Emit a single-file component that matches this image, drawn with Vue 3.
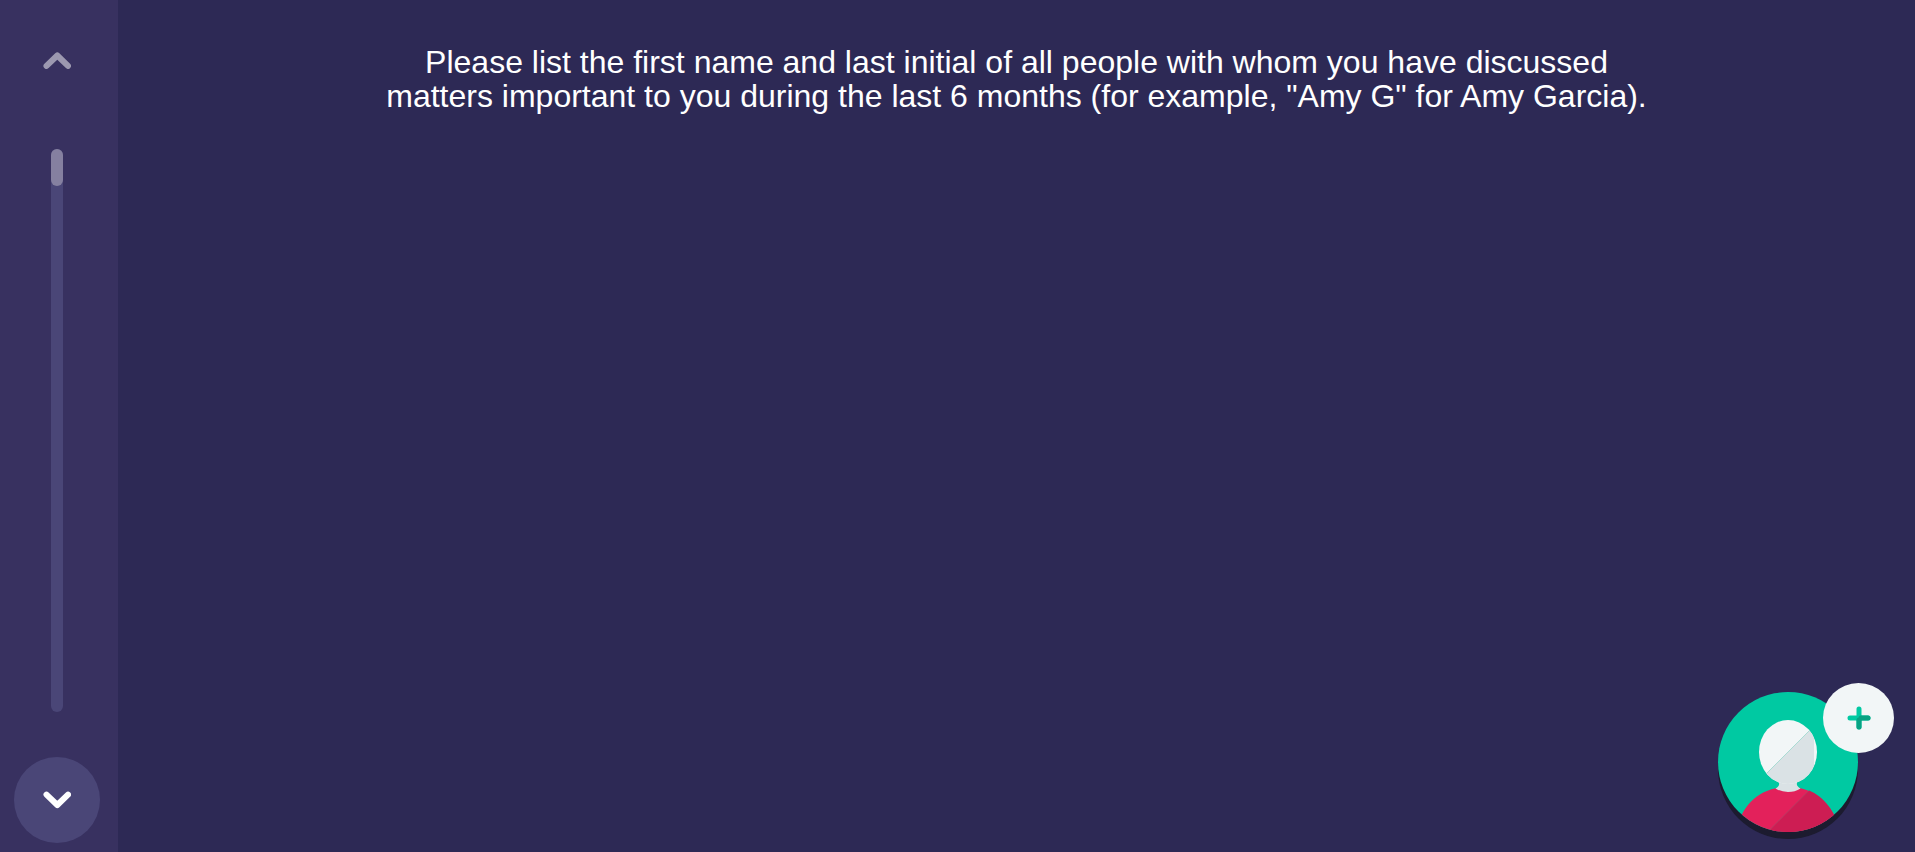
<script setup>
import { ref } from 'vue'

const prompt = 'Please list the first name and last initial of all people with whom you have discussed matters important to you during the last 6 months (for example, "Amy G" for Amy Garcia).'
const progress = ref(6.6)
</script>

<template>
  <div class="stage">
    <nav class="timeline" aria-label="Interview navigation">
      <button class="nav-button back" type="button" aria-label="Back">
        <svg viewBox="0 0 28 18" aria-hidden="true"><path d="M3.500 13.900 14.300 3.500 25 13.900" /></svg>
      </button>
      <div class="track" role="progressbar" aria-label="Progress" :aria-valuenow="progress">
        <div class="fill" :style="{ height: progress + '%' }"></div>
      </div>
      <button class="nav-button next" type="button" aria-label="Next">
        <svg viewBox="0 0 28 18" aria-hidden="true"><path d="M3.500 3.600 14.300 14 25 3.600" /></svg>
      </button>
    </nav>

    <main class="content">
      <h1 class="prompt">{{ prompt }}</h1>

      <button class="add-person" type="button" aria-label="Add a person">
        <svg class="avatar" viewBox="0 0 140 147" aria-hidden="true">
          <defs>
            <clipPath id="disc"><circle cx="70" cy="70" r="70" /></clipPath>
            <clipPath id="head"><ellipse cx="70" cy="60" rx="29" ry="32" /></clipPath>
          </defs>
          <circle cx="70" cy="77" r="70" fill="#1c1b2f" />
          <circle cx="70" cy="70" r="70" fill="#00c9a2" />
          <g clip-path="url(#disc)">
            <path d="M18 140C23 113 42 95 70 95S116 113 122 140Z" fill="#e3215b" />
            <path d="M91 98.500C105 104 118 120 122 140H50Z" fill="#cd1d53" />
            <path d="M91 98.500 50 139.500" stroke="#a34a69" stroke-width=".7" />
          </g>
          <path d="M58 84 61 91Q62 94 57.500 96.500Q63 100 70 100T82.500 96.500Q78 94 79 91L82 84Z" fill="#dae2e5" />
          <g clip-path="url(#head)">
            <path d="M38 26H104V92H38Z" fill="#f2f6f7" />
            <path d="M96 34V94H36Z" fill="#dae2e5" />
            <path d="M96 34 36 94" stroke="#8fd5c9" stroke-width=".7" />
          </g>
        </svg>
        <span class="badge">
          <svg viewBox="0 0 24 24" aria-hidden="true">
            <path d="M12 3V21M3 12H21" stroke="#00c9a2" />
            <path d="M12 14V21M14 12H21" stroke="#07a283" />
            <path d="M14.500 9.500V14.500H9.500Z" fill="#07a283" />
          </svg>
        </span>
      </button>
    </main>
  </div>
</template>

<style>
html,
body {
  margin: 0;
  background: #2d2955;
}
</style>

<style scoped>
.stage {
  display: flex;
  min-height: 100vh;
  background: #2d2955;
  color: #fff;
  font-family: "Liberation Sans", Arial, sans-serif;
}

button {
  margin: 0;
  padding: 0;
  border: 0;
  background: none;
  cursor: pointer;
}

.timeline {
  display: flex;
  flex: none;
  flex-direction: column;
  align-items: center;
  gap: 45px;
  box-sizing: border-box;
  width: 118px;
  padding: 18px 18px 9px 14px;
  background: #383160;
}

.nav-button {
  display: grid;
  place-items: center;
  width: 86px;
  height: 86px;
  border-radius: 50%;
}

.nav-button svg {
  width: 28px;
  height: 18px;
  fill: none;
  stroke: #fff;
  stroke-width: 6;
  stroke-linecap: round;
  stroke-linejoin: round;
}

.back svg {
  opacity: 0.5;
}

.next {
  background: #4a4677;
}

.track {
  flex: 1;
  width: 12px;
  border-radius: 6px;
  background: #4a4677;
}

.fill {
  border-radius: 6px;
  background: #8580a0;
}

.content {
  display: flex;
  flex: 1;
  flex-direction: column;
  justify-content: space-between;
  align-items: center;
  padding: 45px 20px 13px;
}

.prompt {
  max-width: 1280px;
  margin: 0;
  font-size: 32px;
  font-weight: 400;
  line-height: 34px;
  text-align: center;
}

.add-person {
  position: relative;
  align-self: flex-end;
  width: 140px;
  margin-right: 37px;
}

.avatar {
  display: block;
  width: 100%;
}

.badge {
  position: absolute;
  top: -9px;
  right: -36px;
  display: grid;
  place-items: center;
  width: 71px;
  height: 70px;
  border-radius: 50%;
  background: #f2f6f7;
}

.badge svg {
  width: 24px;
  height: 24px;
  fill: none;
  stroke-width: 5;
  stroke-linecap: round;
}
</style>
